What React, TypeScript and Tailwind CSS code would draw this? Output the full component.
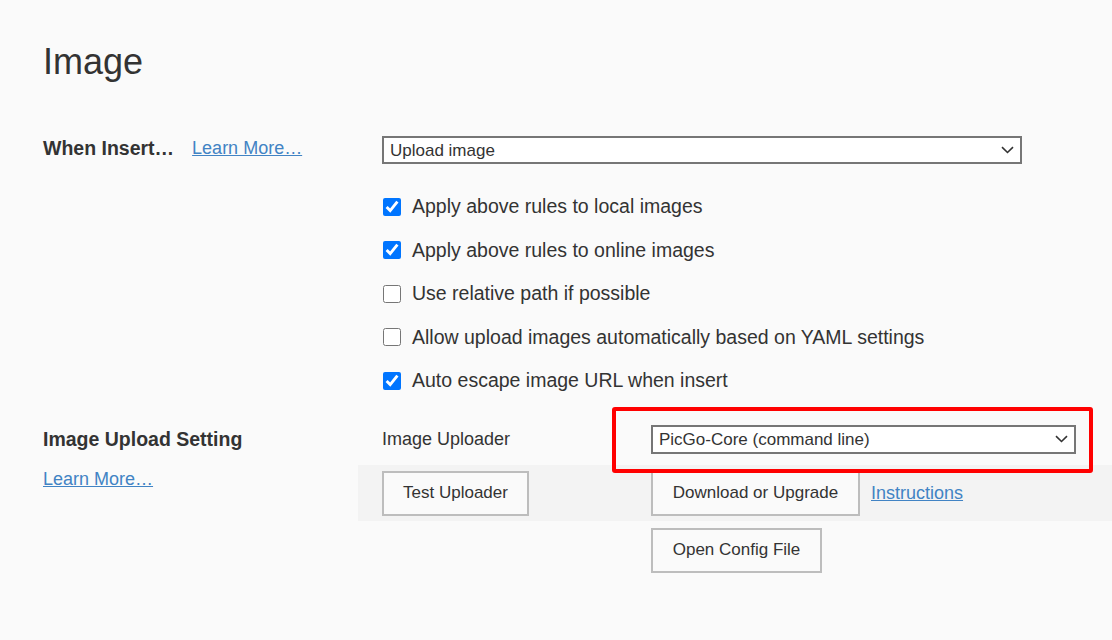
import { useState } from 'react'

const Chevron = () => (
  <svg width="13" height="8" viewBox="0 0 13 8" fill="none" className="shrink-0">
    <path d="M1 1.2l5.5 5.3 5.5-5.3" stroke="#333" strokeWidth="1.6" />
  </svg>
)

const FakeSelect = ({ value, className }: { value: string; className: string }) => (
  <div
    className={`flex items-center justify-between border-2 border-[#767676] bg-white pl-[6px] pr-[6px] text-[17px] leading-none text-[#333] ${className}`}
  >
    <span>{value}</span>
    <Chevron />
  </div>
)

const Button = ({ label, className }: { label: string; className: string }) => (
  <button
    className={`flex h-[45px] items-center justify-center border-2 border-[#bdbdbd] bg-[#fafafa] text-[17px] text-[#333] ${className}`}
  >
    {label}
  </button>
)

const options = [
  { label: 'Apply above rules to local images', checked: true },
  { label: 'Apply above rules to online images', checked: true },
  { label: 'Use relative path if possible', checked: false },
  { label: 'Allow upload images automatically based on YAML settings', checked: false },
  { label: 'Auto escape image URL when insert', checked: true },
]

export default function App() {
  const [checks, setChecks] = useState(options.map((o) => o.checked))

  const toggle = (i: number) => {
    setChecks((prev) => prev.map((c, idx) => (idx === i ? !c : c)))
  }

  return (
    <div className="min-h-[640px] w-full bg-[#fafafa] pl-[43px] pt-[40px] font-['Liberation_Sans',Arial,sans-serif] text-[#333]">
      {/* Title */}
      <h1 className="text-[36px] leading-[44px] font-normal">Image</h1>

      {/* When Insert */}
      <div className="mt-[52px] flex">
        <div className="flex h-[28px] w-[339px] items-center pb-[3px]">
          <span className="text-[19.5px] font-bold">When Insert…</span>
          <a href="#" className="ml-[18px] text-[18px] text-[#4183c4] underline">
            Learn More…
          </a>
        </div>
        <div className="flex flex-col">
          <FakeSelect value="Upload image" className="h-[28px] w-[640px]" />

          <div className="mt-[21px] flex flex-col">
            {options.map((o, i) => (
              <label key={o.label} className="flex h-[43.5px] items-center gap-[11px]">
                <input
                  type="checkbox"
                  checked={checks[i]}
                  onChange={() => toggle(i)}
                  className="ml-[1px] h-[18px] w-[18px] accent-[#0075ff]"
                />
                <span className="text-[19.5px]">{o.label}</span>
              </label>
            ))}
          </div>
        </div>
      </div>

      {/* Image Upload Setting */}
      <div className="mt-[22px] flex">
        <div className="flex w-[339px] flex-col">
          <div className="flex h-[29px] items-center pt-[1px]">
            <span className="text-[19.5px] font-bold">Image Upload Setting</span>
          </div>
          <a href="#" className="mt-[14px] text-[18px] leading-[22px] text-[#4183c4] underline">
            Learn More…
          </a>
        </div>

        <div className="flex flex-1 flex-col">
          <div className="grid grid-cols-[269px_425px]">
            <div className="flex h-[29px] items-center pt-[1px] text-[18px]">Image Uploader</div>
            <div className="relative">
              <FakeSelect value="PicGo-Core (command line)" className="h-[29px] w-[425px]" />
              {/* highlight annotation */}
              <div className="pointer-events-none absolute -top-[18px] -bottom-[19px] -left-[39px] -right-[17px] z-10 rounded-[3px] border-[4px] border-[#ff0000]" />
            </div>
          </div>

          <div className="-ml-[24px] mt-[11px] grid grid-cols-[269px_1fr] bg-[#f3f3f3] pb-[5px] pl-[24px] pt-[6px]">
            <div>
              <Button label="Test Uploader" className="w-[147px]" />
            </div>
            <div className="flex items-center gap-[11px]">
              <Button label="Download or Upgrade" className="w-[209px]" />
              <a href="#" className="text-[18px] text-[#4183c4] underline">
                Instructions
              </a>
            </div>
          </div>

          <div className="ml-[269px] mt-[7px]">
            <Button label="Open Config File" className="w-[171px]" />
          </div>
        </div>
      </div>
    </div>
  )
}
